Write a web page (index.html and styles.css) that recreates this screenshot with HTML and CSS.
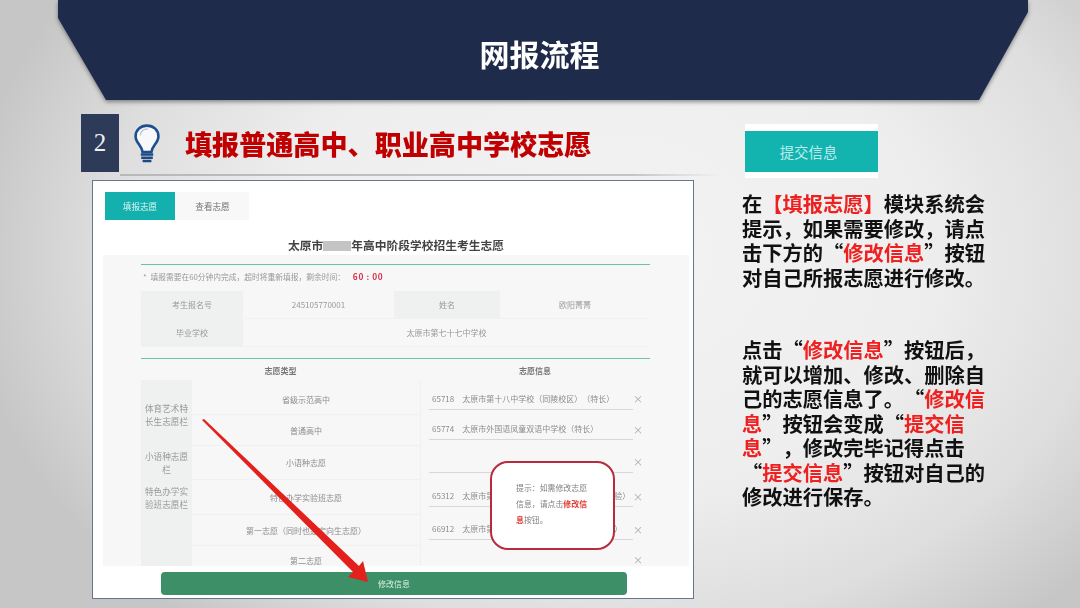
FILE: index.html
```html
<!DOCTYPE html>
<html lang="zh-CN">
<head>
<meta charset="utf-8">
<title>网报流程</title>
<link rel="stylesheet" href="styles.css">
</head>
<body>
<div class="slide">
  <header class="banner-wrap">
    <div class="banner"><h1>网报流程</h1></div>
  </header>
  <main class="content">
    <section class="left">
      <div class="heading">
        <div class="num">2</div>
        <svg class="bulb" viewBox="0 0 26 40" aria-hidden="true">
          <path class="bulb-glass" d="M13 1.6C6.4 1.6 1.6 6.2 1.6 12.4c0 6.4 6 8.8 7 15.6h8.8c1-6.8 7-9.2 7-15.6C24.400 6.200 19.600 1.600 13 1.600Z"/>
          <path class="bulb-shine" d="M6.200 11.500C6.500 7.500 9.500 5 14 5"/>
          <path class="bulb-base" d="M6.800 30.500h12.400M7.200 33.800h11.600M8.600 37h8.800"/>
        </svg>
        <h2>填报普通高中、职业高中学校志愿</h2>
      </div>
      <div class="rule"></div>
      <div class="card">
        <div class="soft">
          <div class="tabs">
            <span class="tab active">填报志愿</span>
            <span class="tab">查看志愿</span>
          </div>
          <h3 class="form-title">太原市<span class="mask"></span>年高中阶段学校招生考生志愿</h3>
          <div class="panel">
            <div class="inner">
              <p class="notice">*&ensp;填报需要在60分钟内完成，超时将重新填报，剩余时间： <b>60 : 00</b></p>
              <div class="info">
                <div class="label">考生报名号</div>
                <div class="value">245105770001</div>
                <div class="label">姓名</div>
                <div class="value">欧阳菁菁</div>
                <div class="label">毕业学校</div>
                <div class="value wide">太原市第七十七中学校</div>
              </div>
              <div class="wish">
                <div class="wish-head span-two">志愿类型</div>
                <div class="wish-head">志愿信息</div>

                <div class="cat c1">体育艺术特长生志愿栏</div>
                <div class="type r1">省级示范高中</div>
                <div class="pick r1"><span>65718&ensp;&ensp;太原市第十八中学校（同陵校区）（特长）</span><i>×</i></div>
                <div class="type r2">普通高中</div>
                <div class="pick r2"><span>65774&ensp;&ensp;太原市外国语凤童双语中学校（特长）</span><i>×</i></div>

                <div class="cat c2">小语种志愿栏</div>
                <div class="type r3">小语种志愿</div>
                <div class="pick r3"><span></span><i>×</i></div>

                <div class="cat c3">特色办学实验班志愿栏</div>
                <div class="type r4">特色办学实验班志愿</div>
                <div class="pick r4"><span>65312&ensp;&ensp;太原市第一中学校（特色办学实验班实验实验）</span><i>×</i></div>

                <div class="cat c4"></div>
                <div class="type r5">第一志愿（同时也是定向生志愿）</div>
                <div class="pick r5"><span>66912&ensp;&ensp;太原市第一中学校（定向生志愿填报类型班）</span><i>×</i></div>
                <div class="type r6">第二志愿</div>
                <div class="pick r6"><span></span><i>×</i></div>
              </div>
            </div>
          </div>
          <div class="submit">修改信息</div>
        </div>
        <svg class="arrow" viewBox="0 0 166 164" aria-hidden="true">
          <path d="M0 1 L2 0 L157 147 L161 142 L166 163 L146 158 L151 153 Z"/>
        </svg>
        <div class="tip">提示：如需修改志愿信息，请点击<em>修改信息</em>按钮。</div>
      </div>
    </section>
    <aside class="right">
      <div class="btn-band"><div class="btn">提交信息</div></div>
      <p class="para first">在<em>【填报志愿】</em>模块系统会<br>提示，如果需要修改，请点<br>击下方的“<em>修改信息</em>”按钮<br>对自己所报志愿进行修改。</p>
      <p class="para second">点击“<em>修改信息</em>”按钮后，<br>就可以增加、修改、删除自<br>己的志愿信息了。“<em>修改信</em><br><em>息</em>”按钮会变成“<em>提交信</em><br><em>息</em>”，修改完毕记得点击<br>“<em>提交信息</em>”按钮对自己的<br>修改进行保存。</p>
    </aside>
  </main>
</div>
</body>
</html>
```
FILE: styles.css
```css
* { box-sizing: border-box; }
html, body { margin: 0; padding: 0; }
body {
  width: 1080px;
  height: 608px;
  overflow: hidden;
  font-family: "Noto Sans CJK SC", "Noto Sans", sans-serif;
  text-spacing-trim: space-all;
}
.slide {
  width: 1080px;
  height: 608px;
  overflow: hidden;
  background: radial-gradient(ellipse 640px 480px at 56% 42%, #f3f3f3 0%, #eeeeee 50%, #dedede 78%, #c6c6c6 100%);
}
.banner-wrap {
  margin: 0 52px 0 58px;
  height: 100px;
  filter: drop-shadow(0 2px 2px rgba(40, 40, 40, .5));
}
.banner {
  height: 100px;
  background: #1e2b4b;
  clip-path: polygon(0 0, 100% 0, 100% 12px, 921px 100%, 48px 100%, 0 18px);
  display: flex;
  align-items: center;
  justify-content: center;
}
h1 {
  margin: 6px 7px 0 0;
  font-size: 30px;
  line-height: 40px;
  font-weight: 700;
  color: #fff;
  filter: blur(.3px);
}
.content {
  display: flex;
  padding: 14px 0 0 81px;
}
.left { width: 640px; flex: none; }
.heading {
  display: flex;
  align-items: center;
  height: 58px;
}
.num {
  width: 38px;
  height: 58px;
  background: #2d3b58;
  color: #eef0f4;
  font: 25px/58px "Liberation Serif", serif;
  text-align: center;
}
.bulb { width: 26px; height: 40px; margin-left: 15px; margin-top: 2px; }
.bulb-glass { fill: #f7f8fa; stroke: #1d4f8e; stroke-width: 2.6; }
.bulb-shine { fill: none; stroke: #bcc8d6; stroke-width: 1.4; }
.bulb-base { fill: none; stroke: #1d4a80; stroke-width: 2.4; }
h2 {
  margin: 2px 0 0 25px;
  font-size: 27.1px;
  line-height: 36px;
  font-weight: 900;
  white-space: nowrap;
  color: #c00000;
  filter: blur(.3px);
}
.rule {
  height: 2px;
  margin: 2px 0 0 39px;
  width: 600px;
  background: linear-gradient(90deg, #b8b8b8, #c4c4c4 85%, transparent);
}
.card {
  position: relative;
  width: 602px;
  height: 419px;
  margin: 4px 0 0 11px;
  background: #fff;
  border: 1px solid #67778a;
  padding: 11px 4px 0 10px;
}
.soft { filter: blur(.5px); }
.tabs { display: flex; gap: 1px; height: 28px; margin-left: 2px; }
.tab {
  width: 73px;
  background: #f8f8f8;
  color: #777;
  font-size: 8.6px;
  line-height: 28px;
  text-align: center;
}
.tab.active { width: 70px; background: #14b0ad; color: #d5f3f2; }
.form-title {
  margin: 15px 0 0;
  height: 20px;
  font-size: 11.75px;
  line-height: 19px;
  font-weight: 700;
  color: #444;
  text-align: center;
}
.mask {
  display: inline-block;
  width: 28px;
  height: 10px;
  background: #c4c4c4;
  vertical-align: -1px;
}
.panel {
  height: 311px;
  overflow: hidden;
  background: #f7f7f7;
  padding: 9px 38px 0 38px;
}
.inner { width: 509px; }
.notice {
  margin: 0;
  height: 27px;
  border-top: 1px solid #6cc0ac;
  padding: 5px 0 0 2px;
  font-size: 7.75px;
  line-height: 12px;
  color: #999;
  white-space: nowrap;
}
.notice b {
  color: #d8324c;
  font-size: 8.4px;
  margin-left: 6px;
  letter-spacing: .6px;
}
.info {
  display: grid;
  grid-template-columns: 102px 151px 106px 150px;
  grid-auto-rows: 28px;
  font-size: 8px;
  color: #999;
  text-align: center;
  height: 68px;
  border-bottom: 1px solid #6cc0ac;
}
.info > div { line-height: 28px; border-bottom: 1px solid #f1f1f1; }
.label { background: #eff1f1; }
.wide { grid-column: 2 / 5; }
.wish {
  display: grid;
  grid-template-columns: 51px 228px 230px;
  grid-template-rows: 21px 35px 31px 34px 35px 31px 30px;
  font-size: 8px;
  color: #8c8c8c;
  text-align: center;
}
.wish-head {
  font-weight: 700;
  color: #777;
  line-height: 24px;
}
.span-two { grid-column: 1 / 3; }
.cat {
  grid-column: 1;
  background: #eff1f1;
  display: flex;
  align-items: center;
  justify-content: center;
  padding: 0 2px;
  font-size: 8.6px;
  line-height: 13px;
  color: #999;
}
.c1 { grid-row: 2 / 4; padding-top: 4px; }
.c2 { grid-row: 4; }
.c3 { grid-row: 5; }
.c4 { grid-row: 6 / 8; }
.type {
  grid-column: 2;
  display: flex;
  align-items: center;
  justify-content: center;
  border-bottom: 1px solid #f0f0f0;
}
.pick {
  grid-column: 3;
  display: flex;
  align-items: center;
  border-left: 1px solid #f0f0f0;
  padding: 0 0 3px 8px;
  text-align: left;
}
.pick span {
  flex: none;
  width: 204px;
  height: 22px;
  line-height: 21px;
  border-bottom: 1px solid #d6d8da;
  white-space: nowrap;
  overflow: hidden;
  padding-left: 3px;
}
.pick i {
  font-style: normal;
  font-size: 10px;
  color: #aaa;
}
.type.r1 { padding-top: 4px; }
.pick.r1 { padding-top: 5px; }
.r1 { grid-row: 2; }
.r2 { grid-row: 3; }
.r3 { grid-row: 4; }
.r4 { grid-row: 5; }
.r5 { grid-row: 6; }
.r6 { grid-row: 7; }
.submit {
  width: 466px;
  height: 23px;
  margin: 6px 0 0 58px;
  border-radius: 4px;
  background: #3c8f66;
  color: #d9efe5;
  font-size: 8px;
  line-height: 23px;
  text-align: center;
}
.arrow {
  position: absolute;
  left: 109px;
  top: 238px;
  width: 166px;
  height: 164px;
  fill: #e3201b;
  filter: blur(.3px);
}
.tip {
  position: absolute;
  left: 397px;
  top: 280px;
  width: 125px;
  height: 89px;
  padding: 17px 22px 0 24px;
  background: #fff;
  border: 2px solid #b72b3f;
  border-radius: 18px;
  font-size: 7.9px;
  line-height: 16px;
  color: #808080;
  filter: blur(.25px);
}
.tip em { font-style: normal; font-weight: 700; color: #e03a30; }
.right { margin-left: 21px; width: 250px; }
.btn-band {
  width: 133px;
  height: 54px;
  margin: 10px 0 0 3px;
  padding-top: 7px;
  background: #fff;
}
.btn {
  height: 41px;
  background: #13b3b0;
  color: #bfeceb;
  font-size: 14.4px;
  line-height: 41px;
  text-align: center;
  padding-right: 6px;
}
.para {
  margin: 0;
  font-size: 20.25px;
  line-height: 24.5px;
  font-weight: 700;
  color: #111;
  white-space: nowrap;
  filter: blur(.3px);
}
.para em { font-style: normal; color: #ef2020; }
.first { margin-top: 14px; }
.second { margin-top: 48px; }
```
